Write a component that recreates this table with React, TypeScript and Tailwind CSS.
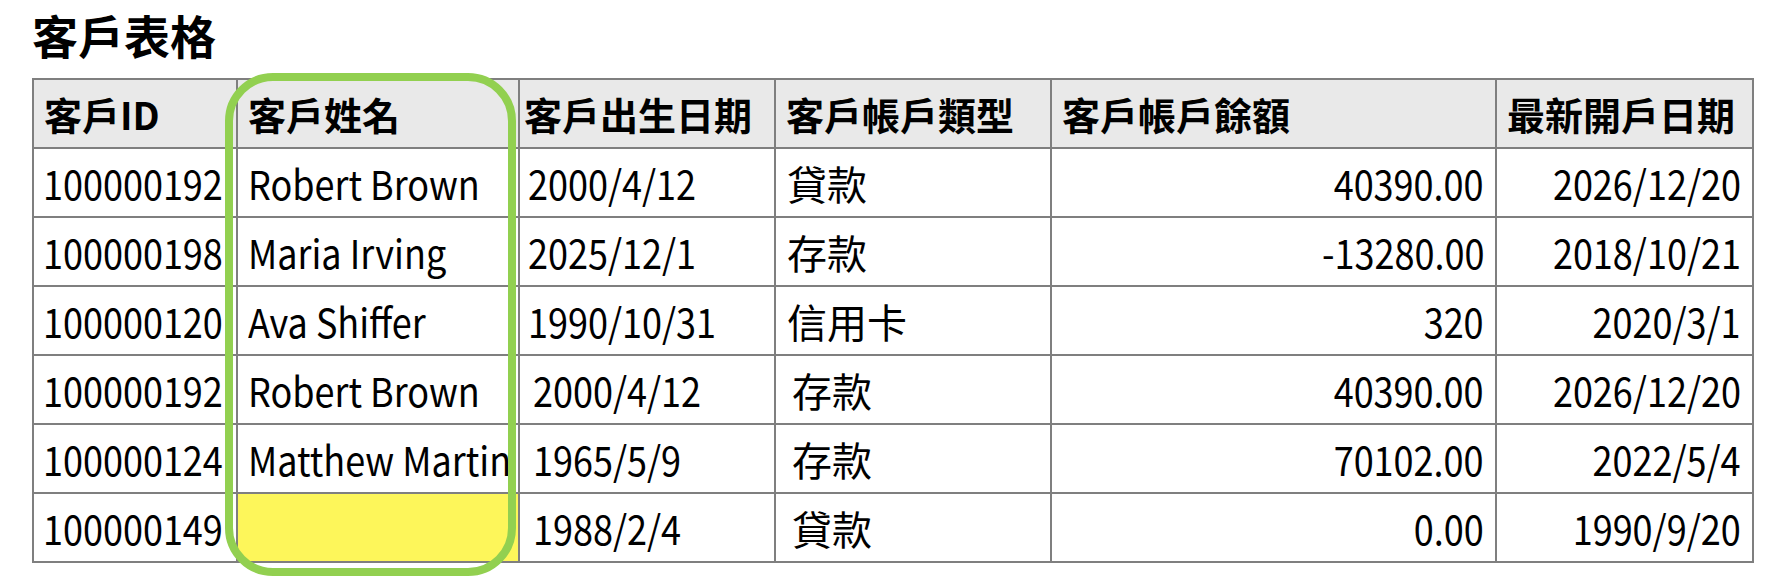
const headers = ["客戶ID", "客戶姓名", "客戶出生日期", "客戶帳戶類型", "客戶帳戶餘額", "最新開戶日期"];

const rows = [
    { id: "100000192", name: "Robert Brown", birth: "2000/4/12", type: "貸款", balance: "40390.00", opened: "2026/12/20", shift: false },
    { id: "100000198", name: "Maria Irving", birth: "2025/12/1", type: "存款", balance: "-13280.00", opened: "2018/10/21", shift: false },
    { id: "100000120", name: "Ava Shiffer", birth: "1990/10/31", type: "信用卡", balance: "320", opened: "2020/3/1", shift: false },
    { id: "100000192", name: "Robert Brown", birth: "2000/4/12", type: "存款", balance: "40390.00", opened: "2026/12/20", shift: true },
    { id: "100000124", name: "Matthew Martin", birth: "1965/5/9", type: "存款", balance: "70102.00", opened: "2022/5/4", shift: true },
    { id: "100000149", name: "", birth: "1988/2/4", type: "貸款", balance: "0.00", opened: "1990/9/20", shift: true },
];

const cell = "border-2 border-[#7f7f7f] h-[69px] whitespace-nowrap overflow-hidden";

// the latin text in the screenshot is narrower than the font, squeeze it a bit
const Narrow = ({ children, right }: { children: React.ReactNode; right?: boolean }) => (
    <span className={`inline-block scale-x-[0.9] ${right ? "origin-right" : "origin-left"}`}>{children}</span>
);

const App = () => {
    return (
        <div className="relative min-h-screen bg-white text-black font-['Noto_Sans_CJK_TC','Noto_Sans',sans-serif]">
            <div className="pl-[32px] pt-[7px]">
                <h1 className="text-[46px] font-bold leading-[54px]">客戶表格</h1>
                <table className="mt-[17px] table-fixed border-collapse w-[1720px] text-[40px] leading-none">
                    <colgroup>
                        <col className="w-[204px]" />
                        <col className="w-[282px]" />
                        <col className="w-[256px]" />
                        <col className="w-[276px]" />
                        <col className="w-[445px]" />
                        <col className="w-[257px]" />
                    </colgroup>
                    <thead>
                        <tr className="bg-[#e9e9e9]">
                            {headers.map((h, i) => (
                                <th
                                    key={h}
                                    className={`${cell} font-bold text-[38px] text-left ${i === 2 ? "px-[4px]" : "px-[10px]"}`}
                                >
                                    {h}
                                </th>
                            ))}
                        </tr>
                    </thead>
                    <tbody>
                        {rows.map((r, i) => (
                            <tr key={i}>
                                <td className={`${cell} pl-[9px]`}><Narrow>{r.id}</Narrow></td>
                                <td className={`${cell} px-[10px] ${r.name === "" ? "bg-[#fdf65a]" : ""}`}><Narrow>{r.name}</Narrow></td>
                                <td className={`${cell} ${r.shift ? "pl-[13px]" : "pl-[8px]"}`}><Narrow>{r.birth}</Narrow></td>
                                <td className={`${cell} ${r.shift ? "pl-[16px]" : "pl-[11px]"}`}>{r.type}</td>
                                <td className={`${cell} pr-[11px] text-right`}><Narrow right>{r.balance}</Narrow></td>
                                <td className={`${cell} pr-[11px] text-right`}><Narrow right>{r.opened}</Narrow></td>
                            </tr>
                        ))}
                    </tbody>
                </table>
            </div>
            {/* green highlight around the name column */}
            <div className="absolute left-[225px] top-[73px] w-[291px] h-[503px] rounded-[48px] border-[8px] border-[#92d050] pointer-events-none" />
        </div>
    );
};

export default App;
